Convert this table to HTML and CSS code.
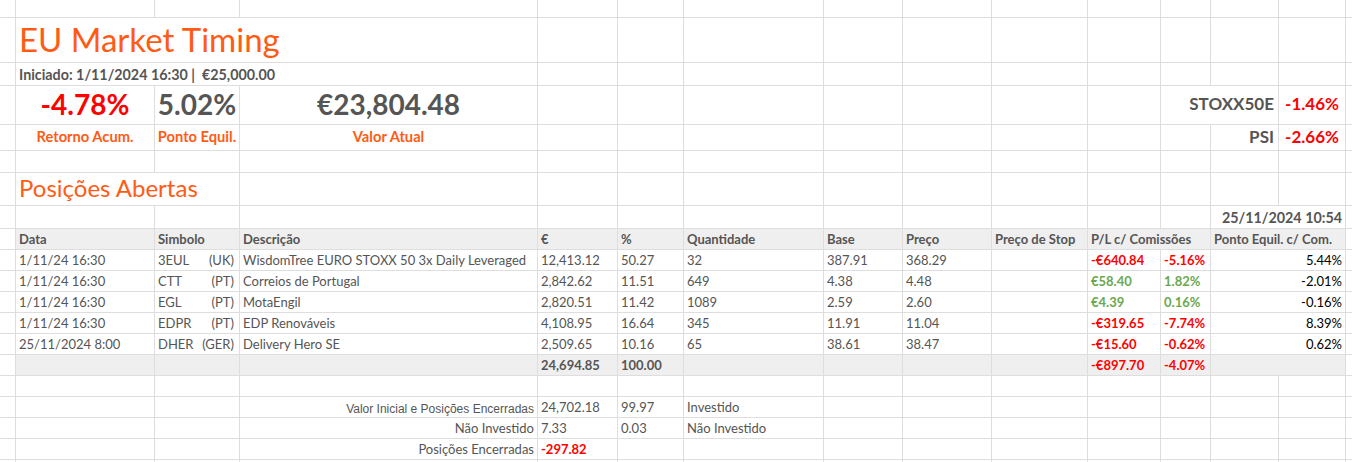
FILE: index.html
```html
<!DOCTYPE html>
<html lang="pt">
<head>
<meta charset="utf-8">
<title>EU Market Timing</title>
<link rel="stylesheet" href="styles.css">
</head>
<body>
<div class="sheet">
  <!-- row 0 -->
  <div class="c"></div><div class="c"></div><div class="c"></div><div class="c"></div><div class="c"></div><div class="c"></div><div class="c"></div><div class="c"></div><div class="c"></div><div class="c"></div><div class="c"></div><div class="c"></div><div class="c"></div><div class="c"></div><div class="c"></div>
  <!-- row 1 title -->
  <div class="c"></div>
  <div class="c s3 title">EU Market Timing</div>
  <div class="c"></div><div class="c"></div><div class="c"></div><div class="c"></div><div class="c"></div><div class="c"></div><div class="c"></div><div class="c"></div><div class="c"></div><div class="c"></div><div class="c"></div>
  <!-- row 2 subtitle -->
  <div class="c"></div>
  <div class="c s3 sub">Iniciado: 1/11/2024 16:30 |&nbsp; €25,000.00</div>
  <div class="c"></div><div class="c"></div><div class="c"></div><div class="c"></div><div class="c"></div><div class="c"></div><div class="c"></div><div class="c"></div><div class="c"></div><div class="c"></div><div class="c"></div>
  <!-- row 3 kpis -->
  <div class="c"></div>
  <div class="c kpi red">-4.78%</div>
  <div class="c kpi">5.02%</div>
  <div class="c kpi">€23,804.48</div>
  <div class="c"></div><div class="c"></div><div class="c"></div><div class="c"></div><div class="c"></div><div class="c"></div>
  <div class="c"></div>
  <div class="c s2 idx">STOXX50E</div>
  <div class="c idxv">-1.46%</div>
  <div class="c"></div>
  <!-- row 4 kpi labels -->
  <div class="c"></div>
  <div class="c klabel">Retorno Acum.</div>
  <div class="c klabel">Ponto Equil.</div>
  <div class="c klabel">Valor Atual</div>
  <div class="c"></div><div class="c"></div><div class="c"></div><div class="c"></div><div class="c"></div><div class="c"></div><div class="c"></div><div class="c"></div>
  <div class="c idx">PSI</div>
  <div class="c idxv">-2.66%</div>
  <div class="c"></div>
  <!-- row 5 -->
  <div class="c"></div><div class="c"></div><div class="c"></div><div class="c"></div><div class="c"></div><div class="c"></div><div class="c"></div><div class="c"></div><div class="c"></div><div class="c"></div><div class="c"></div><div class="c"></div><div class="c"></div><div class="c"></div><div class="c"></div>
  <!-- row 6 section -->
  <div class="c"></div>
  <div class="c s2 section">Posições Abertas</div>
  <div class="c"></div><div class="c"></div><div class="c"></div><div class="c"></div><div class="c"></div><div class="c"></div><div class="c"></div><div class="c"></div><div class="c"></div><div class="c"></div><div class="c"></div><div class="c"></div>
  <!-- row 7 date -->
  <div class="c"></div>
  <div class="c"></div><div class="c"></div><div class="c"></div><div class="c"></div><div class="c"></div><div class="c"></div><div class="c"></div><div class="c"></div><div class="c"></div><div class="c"></div><div class="c"></div>
  <div class="c s2 stamp">25/11/2024 10:54</div>
  <div class="c"></div>
  <!-- row 8 header -->
  <div class="c"></div>
  <div class="c hd">Data</div>
  <div class="c hd">Simbolo</div>
  <div class="c hd">Descrição</div>
  <div class="c hd">€</div>
  <div class="c hd">%</div>
  <div class="c hd">Quantidade</div>
  <div class="c hd">Base</div>
  <div class="c hd">Preço</div>
  <div class="c hd">Preço de Stop</div>
  <div class="c s2 hd">P/L c/ Comissões</div>
  <div class="c s2 hd">Ponto Equil. c/ Com.</div>
  <div class="c"></div>
  <!-- row 9 -->
  <div class="c"></div>
  <div class="c t">1/11/24 16:30</div>
  <div class="c t sym"><span>3EUL</span><span>(UK)</span></div>
  <div class="c t">WisdomTree EURO STOXX 50 3x Daily Leveraged</div>
  <div class="c t">12,413.12</div>
  <div class="c t">50.27</div>
  <div class="c t">32</div>
  <div class="c t">387.91</div>
  <div class="c t">368.29</div>
  <div class="c t"></div>
  <div class="c t pl red">-€640.84</div>
  <div class="c t pl red">-5.16%</div>
  <div class="c s2 t be">5.44%</div>
  <div class="c"></div>
  <!-- row 10 -->
  <div class="c"></div>
  <div class="c t">1/11/24 16:30</div>
  <div class="c t sym"><span>CTT</span><span>(PT)</span></div>
  <div class="c t">Correios de Portugal</div>
  <div class="c t">2,842.62</div>
  <div class="c t">11.51</div>
  <div class="c t">649</div>
  <div class="c t">4.38</div>
  <div class="c t">4.48</div>
  <div class="c t"></div>
  <div class="c t pl green">€58.40</div>
  <div class="c t pl green">1.82%</div>
  <div class="c s2 t be">-2.01%</div>
  <div class="c"></div>
  <!-- row 11 -->
  <div class="c"></div>
  <div class="c t">1/11/24 16:30</div>
  <div class="c t sym"><span>EGL</span><span>(PT)</span></div>
  <div class="c t">MotaEngil</div>
  <div class="c t">2,820.51</div>
  <div class="c t">11.42</div>
  <div class="c t">1089</div>
  <div class="c t">2.59</div>
  <div class="c t">2.60</div>
  <div class="c t"></div>
  <div class="c t pl green">€4.39</div>
  <div class="c t pl green">0.16%</div>
  <div class="c s2 t be">-0.16%</div>
  <div class="c"></div>
  <!-- row 12 -->
  <div class="c"></div>
  <div class="c t">1/11/24 16:30</div>
  <div class="c t sym"><span>EDPR</span><span>(PT)</span></div>
  <div class="c t">EDP Renováveis</div>
  <div class="c t">4,108.95</div>
  <div class="c t">16.64</div>
  <div class="c t">345</div>
  <div class="c t">11.91</div>
  <div class="c t">11.04</div>
  <div class="c t"></div>
  <div class="c t pl red">-€319.65</div>
  <div class="c t pl red">-7.74%</div>
  <div class="c s2 t be">8.39%</div>
  <div class="c"></div>
  <!-- row 13 -->
  <div class="c"></div>
  <div class="c t">25/11/2024 8:00</div>
  <div class="c t sym"><span>DHER</span><span>(GER)</span></div>
  <div class="c t">Delivery Hero SE</div>
  <div class="c t">2,509.65</div>
  <div class="c t">10.16</div>
  <div class="c t">65</div>
  <div class="c t">38.61</div>
  <div class="c t">38.47</div>
  <div class="c t"></div>
  <div class="c t pl red">-€15.60</div>
  <div class="c t pl red">-0.62%</div>
  <div class="c s2 t be">0.62%</div>
  <div class="c"></div>
  <!-- row 14 totals -->
  <div class="c"></div>
  <div class="c tot"></div>
  <div class="c tot"></div>
  <div class="c tot"></div>
  <div class="c tot">24,694.85</div>
  <div class="c tot">100.00</div>
  <div class="c tot"></div>
  <div class="c tot"></div>
  <div class="c tot"></div>
  <div class="c tot"></div>
  <div class="c tot red">-€897.70</div>
  <div class="c tot red">-4.07%</div>
  <div class="c s2 tot"></div>
  <div class="c"></div>
  <!-- row 15 -->
  <div class="c"></div><div class="c"></div><div class="c"></div><div class="c"></div><div class="c"></div><div class="c"></div><div class="c"></div><div class="c"></div><div class="c"></div><div class="c"></div><div class="c"></div><div class="c"></div><div class="c"></div><div class="c"></div><div class="c"></div>
  <!-- row 16 -->
  <div class="c"></div><div class="c"></div><div class="c"></div>
  <div class="c t r arial">Valor Inicial e Posições Encerradas</div>
  <div class="c t">24,702.18</div>
  <div class="c t">99.97</div>
  <div class="c t">Investido</div>
  <div class="c"></div><div class="c"></div><div class="c"></div><div class="c"></div><div class="c"></div><div class="c"></div><div class="c"></div><div class="c"></div>
  <!-- row 17 -->
  <div class="c"></div><div class="c"></div><div class="c"></div>
  <div class="c t r">Não Investido</div>
  <div class="c t">7.33</div>
  <div class="c t">0.03</div>
  <div class="c t">Não Investido</div>
  <div class="c"></div><div class="c"></div><div class="c"></div><div class="c"></div><div class="c"></div><div class="c"></div><div class="c"></div><div class="c"></div>
  <!-- row 18 -->
  <div class="c"></div><div class="c"></div><div class="c"></div>
  <div class="c t r">Posições Encerradas</div>
  <div class="c t pl red">-297.82</div>
  <div class="c"></div><div class="c"></div><div class="c"></div><div class="c"></div><div class="c"></div><div class="c"></div><div class="c"></div><div class="c"></div><div class="c"></div><div class="c"></div>
  <!-- row 19 -->
  <div class="c"></div><div class="c"></div><div class="c"></div><div class="c"></div><div class="c"></div><div class="c"></div><div class="c"></div><div class="c"></div><div class="c"></div><div class="c"></div><div class="c"></div><div class="c"></div><div class="c"></div><div class="c"></div><div class="c"></div>
</div>
</body>
</html>
```

FILE: styles.css
```css
html, body {
  margin: 0;
  padding: 0;
  background: #ffffff;
  overflow: hidden;
}

body {
  font-family: "Lato", "Noto Sans", sans-serif;
  color: #555555;
  width: 1352px;
  height: 462px;
}

.sheet {
  display: grid;
  width: max-content;
  gap: 1px;
  background: #dedede;
  grid-template-columns: 15px 138px 84px 297px 79px 65px 139px 78px 88px 95px 72px 49px 67px 66px 40px;
  grid-template-rows: 17px 44px 22px 38px 25px 21px 32px 22px 20px 20px 20px 20px 20px 20px 20px 20px 20px 20px 20px 20px;
}

.c {
  background: #ffffff;
  display: flex;
  align-items: flex-end;
  padding: 0 3px 1px;
  white-space: nowrap;
  overflow: hidden;
  min-width: 0;
  line-height: 1.2;
}

.s2 { grid-column: span 2; }
.s3 { grid-column: span 3; }

.title {
  font-size: 33px;
  color: #ff5b14;
  padding-bottom: 2px;
}

.sub {
  font-size: 14.3px;
  font-weight: 700;
  padding-bottom: 2px;
}

.kpi {
  font-size: 28px;
  font-weight: 700;
  justify-content: center;
  padding-bottom: 2px;
}

.klabel {
  font-size: 14.7px;
  font-weight: 700;
  color: #ff5b14;
  justify-content: center;
  align-items: center;
}

.idx {
  font-size: 17px;
  font-weight: 700;
  justify-content: flex-end;
  align-items: center;
  padding-right: 4px;
}

.idxv {
  font-size: 17px;
  font-weight: 700;
  color: #ff0000;
  justify-content: center;
  align-items: center;
}

.section {
  font-size: 24px;
  color: #ff5b14;
  padding-bottom: 2px;
}

.stamp {
  font-size: 14.3px;
  font-weight: 700;
  justify-content: flex-end;
  padding-bottom: 2px;
}

.hd {
  background: #efefef;
  font-size: 13px;
  font-weight: 700;
}

.t {
  font-size: 13px;
}

.tot {
  background: #efefef;
  font-size: 13px;
  font-weight: 700;
}

.sym {
  justify-content: space-between;
  padding-right: 5px;
}

.r { justify-content: flex-end; }

.arial {
  font-family: "Liberation Sans", Arial, sans-serif;
  font-size: 12px;
}

.pl { font-weight: 700; }

.be {
  color: #000000;
  justify-content: flex-end;
}

.red { color: #ff0000; }
.green { color: #6aa84f; }
```
